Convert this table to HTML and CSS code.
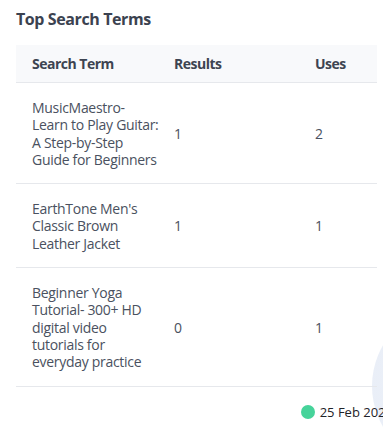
FILE: index.html
```html
<!DOCTYPE html>
<html lang="en">
<head>
<meta charset="utf-8">
<title>Top Search Terms</title>
<link rel="stylesheet" href="styles.css">
</head>
<body>
<main class="page">
  <div class="fab-glow"></div>
  <section class="card">
    <h2 class="card-title">Top Search Terms</h2>
    <div class="table-wrap">
      <table class="terms">
        <thead>
          <tr>
            <th class="col-term">Search Term</th>
            <th class="col-results">Results</th>
            <th class="col-uses">Uses</th>
          </tr>
        </thead>
        <tbody>
          <tr>
            <td>MusicMaestro- Learn to Play Guitar: A Step-by-Step Guide for Beginners</td>
            <td>1</td>
            <td>2</td>
          </tr>
          <tr>
            <td>EarthTone Men's Classic Brown Leather Jacket</td>
            <td>1</td>
            <td>1</td>
          </tr>
          <tr>
            <td>Beginner Yoga Tutorial- 300+ HD digital video tutorials for everyday practice</td>
            <td>0</td>
            <td>1</td>
          </tr>
        </tbody>
      </table>
    </div>
    <footer class="updated">
      <span class="status-dot"></span>
      <span class="updated-date">25 Feb 2025</span>
    </footer>
  </section>
</main>
</body>
</html>
```
FILE: styles.css
```css
html, body {
  margin: 0;
  padding: 0;
  background: #ffffff;
}

body {
  width: 383px;
  height: 432px;
  overflow: hidden;
  font-family: "Open Sans", "Noto Sans", sans-serif;
  color: #464d5b;
}

.page {
  position: relative;
  width: 383px;
  height: 432px;
  overflow: hidden;
}

.card {
  position: relative;
  padding: 8px 6px 0 16px;
}

.card-title {
  margin: 0 0 14px;
  font-size: 16px;
  line-height: 23px;
  font-weight: 700;
  color: #3b4250;
  letter-spacing: -0.4px;
}

.table-wrap {
  width: 361px;
  overflow: hidden;
}

.terms {
  border-collapse: collapse;
  table-layout: fixed;
  width: 440px;
}

.terms th,
.terms td {
  text-align: left;
  padding: 0 0 0 16px;
  vertical-align: middle;
  border-bottom: 1px solid #e6e8ec;
}

/* the term column runs close to the results column */
.col-term { width: 127px; }
.col-results { width: 125px; }
.col-uses { width: 157px; }

.terms th:nth-child(2),
.terms td:nth-child(2) {
  padding-left: 15px;
}

.terms th {
  background: #f8f9fb;
  height: 37px;
  font-size: 14px;
  font-weight: 700;
  color: #3d4451;
  letter-spacing: -0.5px;
}

.terms td {
  padding-top: 16px;
  padding-bottom: 15px;
  font-size: 14px;
  line-height: 17.3px;
  color: #4a5160;
  letter-spacing: -0.3px;
}

.updated {
  display: flex;
  justify-content: flex-end;
  align-items: center;
  gap: 5px;
  margin: 16px -16px 0 0;
}

.status-dot {
  width: 14px;
  height: 14px;
  border-radius: 50%;
  background: #46d39a;
  flex: none;
}

.updated-date {
  font-size: 13px;
  color: #1f2329;
  white-space: nowrap;
}

/* floating help button peeking in from the right edge */
.fab-glow {
  position: absolute;
  left: 372px;
  top: 305px;
  width: 162px;
  height: 162px;
  border-radius: 50%;
  background: radial-gradient(circle, #eef2f9 0%, #e9eef7 82%, #f2f5fb 92%, rgba(255, 255, 255, 0) 100%);
}
```
